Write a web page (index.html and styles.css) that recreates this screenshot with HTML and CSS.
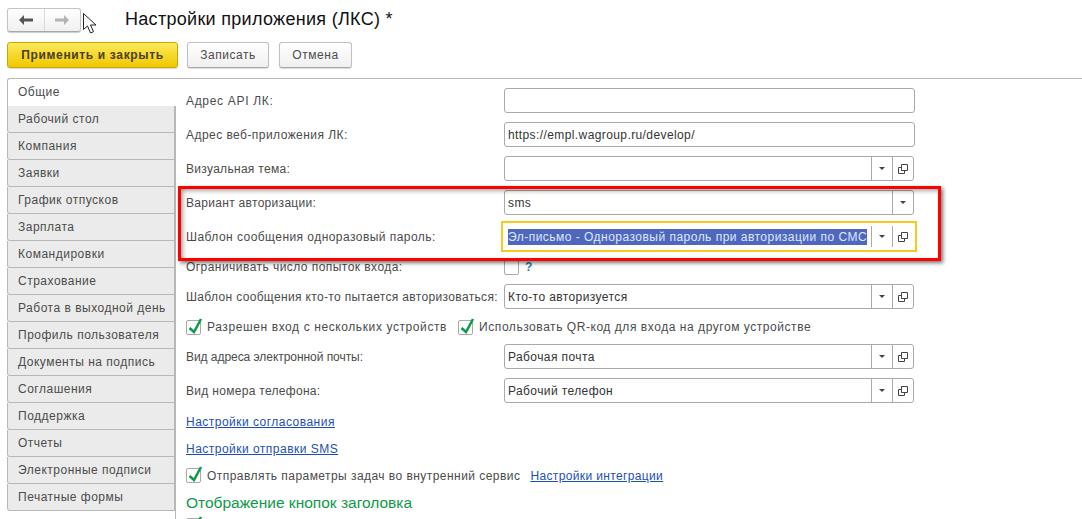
FILE: index.html
```html
<!DOCTYPE html>
<html lang="ru">
<head>
<meta charset="utf-8">
<title>Настройки приложения (ЛКС)</title>
<link rel="stylesheet" href="styles.css">
</head>
<body>
<div class="page">
  <header class="head">
    <div class="nav">
      <button class="nav-btn">
        <svg width="14" height="10" viewBox="0 0 14 10"><path d="M0 5 5 0v3.500h9v3H5V10z" fill="#555"/></svg>
      </button>
      <button class="nav-btn">
        <svg width="14" height="10" viewBox="0 0 14 10"><path d="M14 5 9 0v3.500H0v3h9V10z" fill="#b4b4b4"/></svg>
      </button>
    </div>
    <h1 class="title">Настройки приложения (ЛКС) *</h1>
  </header>
  <div class="toolbar">
    <button class="btn primary">Применить и закрыть</button>
    <button class="btn save">Записать</button>
    <button class="btn cancel">Отмена</button>
  </div>
  <div class="main">
    <nav class="tabs">
      <div class="tab active">Общие</div>
      <div class="tab">Рабочий стол</div>
      <div class="tab">Компания</div>
      <div class="tab">Заявки</div>
      <div class="tab">График отпусков</div>
      <div class="tab">Зарплата</div>
      <div class="tab">Командировки</div>
      <div class="tab">Страхование</div>
      <div class="tab">Работа в выходной день</div>
      <div class="tab">Профиль пользователя</div>
      <div class="tab">Документы на подпись</div>
      <div class="tab">Соглашения</div>
      <div class="tab">Поддержка</div>
      <div class="tab">Отчеты</div>
      <div class="tab">Электронные подписи</div>
      <div class="tab">Печатные формы</div>
    </nav>
    <section class="form">
      <div class="row"><label class="lbl ls68">Адрес API ЛК:</label><div class="field plain"></div></div>
      <div class="row"><label class="lbl">Адрес веб-приложения ЛК:</label><div class="field plain"><span class="val">https://empl.wagroup.ru/develop/</span></div></div>
      <div class="row"><label class="lbl ls30">Визуальная тема:</label>
        <div class="field"><span class="val"></span>
          <span class="fb"><i class="caret"></i></span>
          <span class="fb"><svg class="open" width="10" height="10" viewBox="0 0 10 10"><path d="M3.500.5h6v6h-6zM3.500 3.500H.5v6h6V7" fill="none" stroke="#444"/></svg></span>
        </div>
      </div>
      <div class="row"><label class="lbl ls30">Вариант авторизации:</label>
        <div class="field"><span class="val">sms</span><span class="fb"><i class="caret"></i></span></div>
      </div>
      <div class="row"><label class="lbl">Шаблон сообщения одноразовый пароль:</label>
        <div class="field focus"><span class="val"><span class="sel">Эл-письмо - Одноразовый пароль при авторизации по СМС</span></span>
          <span class="fb"><i class="caret"></i></span>
          <span class="fb"><svg class="open" width="10" height="10" viewBox="0 0 10 10"><path d="M3.500.5h6v6h-6zM3.500 3.500H.5v6h6V7" fill="none" stroke="#444"/></svg></span>
        </div>
      </div>
      <div class="row check-row"><label class="lbl">Ограничивать число попыток входа:</label><span class="cb"></span><span class="help">?</span></div>
      <div class="row tpl"><label class="lbl ls34">Шаблон сообщения кто-то пытается авторизоваться:</label>
        <div class="field"><span class="val">Кто-то авторизуется</span>
          <span class="fb"><i class="caret"></i></span>
          <span class="fb"><svg class="open" width="10" height="10" viewBox="0 0 10 10"><path d="M3.500.5h6v6h-6zM3.500 3.500H.5v6h6V7" fill="none" stroke="#444"/></svg></span>
        </div>
      </div>
      <div class="line devices">
        <span class="cb"><svg width="16" height="16" viewBox="0 0 16 16"><path d="M3.500 8 8 12 15 -1" fill="none" stroke="#0d9a48" stroke-width="2.500"/></svg></span><span class="txt wide">Разрешен вход с нескольких устройств</span>
        <span class="cb"><svg width="16" height="16" viewBox="0 0 16 16"><path d="M3.500 8 8 12 15 -1" fill="none" stroke="#0d9a48" stroke-width="2.500"/></svg></span><span class="txt qr">Использовать QR-код для входа на другом устройстве</span>
      </div>
      <div class="row"><label class="lbl ls00">Вид адреса электронной почты:</label>
        <div class="field"><span class="val">Рабочая почта</span>
          <span class="fb"><i class="caret"></i></span>
          <span class="fb"><svg class="open" width="10" height="10" viewBox="0 0 10 10"><path d="M3.500.5h6v6h-6zM3.500 3.500H.5v6h6V7" fill="none" stroke="#444"/></svg></span>
        </div>
      </div>
      <div class="row"><label class="lbl ls30">Вид номера телефона:</label>
        <div class="field"><span class="val">Рабочий телефон</span>
          <span class="fb"><i class="caret"></i></span>
          <span class="fb"><svg class="open" width="10" height="10" viewBox="0 0 10 10"><path d="M3.500.5h6v6h-6zM3.500 3.500H.5v6h6V7" fill="none" stroke="#444"/></svg></span>
        </div>
      </div>
      <div class="line link-line first"><a class="link">Настройки согласования</a></div>
      <div class="line link-line"><a class="link">Настройки отправки SMS</a></div>
      <div class="line link-line">
        <span class="cb"><svg width="16" height="16" viewBox="0 0 16 16"><path d="M3.500 8 8 12 15 -1" fill="none" stroke="#0d9a48" stroke-width="2.500"/></svg></span><span class="txt">Отправлять параметры задач во внутренний сервис</span><a class="link integ">Настройки интеграции</a>
      </div>
      <h2 class="group">Отображение кнопок заголовка</h2>
      <div class="line cut">
        <span class="cb"><svg width="16" height="16" viewBox="0 0 16 16"><path d="M3.500 8 8 12 15 -1" fill="none" stroke="#0d9a48" stroke-width="2.500"/></svg></span><span class="txt">Отображать</span>
      </div>
    </section>
  </div>
</div>
<svg class="cursor" width="14" height="21" viewBox="0 0 14 21"><path d="M.5.5v16l4-3.500 3 7 3-1.300-3-6.700h5.500z" fill="#fff" stroke="#222"/></svg>
<div class="mark"></div>
</body>
</html>
```
FILE: styles.css
```css
* { box-sizing: border-box; }
html, body { margin: 0; height: 100%; }
body {
  width: 1082px;
  height: 519px;
  overflow: hidden;
  background: #fff;
  font: 12px/16px "Liberation Sans", Arial, sans-serif;
  letter-spacing: .45px;
  color: #4b4b4b;
  position: relative;
}
.page { padding: 8px 0 0 7px; }
.head { display: flex; align-items: center; height: 24px; }
.nav {
  display: flex;
  width: 74px;
  height: 24px;
  border: 1px solid #c4c4c4;
  border-bottom-color: #a8a8a8;
  border-radius: 3px;
  background: linear-gradient(#fff, #f0f0f0);
  box-shadow: 0 1px 1px rgba(0,0,0,.2);
}
.nav-btn {
  flex: 1;
  border: 0;
  padding: 0;
  background: none;
  display: flex;
  align-items: center;
  justify-content: center;
}
.nav-btn + .nav-btn { border-left: 1px solid #d9d9d9; }
.title {
  margin: 0 0 3px 44px;
  font-size: 18px;
  line-height: 24px;
  font-weight: 400;
  color: #111;
  letter-spacing: .3px;
}
.toolbar { display: flex; margin-top: 10px; height: 26px; }
.btn {
  font: inherit;
  letter-spacing: .55px;
  height: 26px;
  padding: 0;
  border: 1px solid #c0c0c0;
  border-bottom-color: #a8a8a8;
  border-radius: 3px;
  background: linear-gradient(#fff, #f0f0f0);
  box-shadow: 0 1px 1px rgba(0,0,0,.15);
  color: #4b4b4b;
}
.primary {
  width: 171px;
  font-weight: 700;
  letter-spacing: .65px;
  background: linear-gradient(#fdea5c, #f0c800);
  border-color: #c8a800;
  color: #4a4020;
}
.save { width: 82px; margin-left: 9px; }
.cancel { width: 73px; margin-left: 10px; }
.main { display: flex; margin-top: 10px; }
.tabs { width: 168px; flex: none; letter-spacing: .5px; }
.tab {
  height: 27px;
  padding: 5px 0 0 10px;
  background: #ebebeb;
  border: 1px solid #b8b8b8;
  border-top: 0;
  border-radius: 0 0 0 3px;
}
.tab.active {
  height: 28px;
  position: relative;
  z-index: 1;
  margin-right: -1px;
  background: #fff;
  border-top: 1px solid #b8b8b8;
  border-right: 0;
  border-bottom: 0;
  border-radius: 3px 0 0 0;
}
.form {
  flex: 1;
  height: 441px;
  padding: 9px 0 0 10px;
  border-top: 1px solid #b8b8b8;
  border-left: 1px solid #b8b8b8;
  overflow: hidden;
}
.row { display: flex; align-items: center; height: 34px; padding-bottom: 9px; }
.lbl { width: 318px; flex: none; white-space: nowrap; }
.ls68 { letter-spacing: .68px; }
.ls34 { letter-spacing: .34px; }
.ls30 { letter-spacing: .3px; }
.ls00 { letter-spacing: -.05px; }
.field {
  width: 410px;
  height: 25px;
  display: flex;
  align-items: stretch;
  border: 1px solid #a9a9a9;
  border-radius: 3px;
  background: #fff;
  color: #333;
}
.field.plain { width: 411px; }
.val { flex: 1; padding: 4px 0 0 3px; white-space: nowrap; min-width: 0; letter-spacing: .4px; }
.fb {
  width: 21px;
  flex: none;
  border-left: 1px solid #a9a9a9;
  display: flex;
  align-items: center;
  justify-content: center;
}
.caret { display: block; width: 6px; height: 3px; border: solid transparent; border-width: 3px 3px 0; border-top-color: #444; }
.open { display: block; }
.focus {
  width: 416px;
  height: 31px;
  margin: 0 0 0 -3px;
  border: 2px solid #fbc81e;
  border-radius: 0;
}
.focus .val { padding: 6px 0 0 5px; }
.focus .sel { letter-spacing: .48px; }
.focus .fb { margin: 3px 0; }
.focus .fb:last-child { margin-right: 2px; }
.sel { background: #4f68bd; color: #dfe6ff; padding: 1px 0; }
.check-row { height: 20px; padding-bottom: 0; margin: -1px 0 7px; }
.cb {
  width: 15px;
  height: 15px;
  flex: none;
  display: inline-block;
  border: 1px solid #a9a9a9;
  border-radius: 2px;
  background: #fff;
  position: relative;
}
.cb svg { position: absolute; left: -1px; top: -1px; overflow: visible; }
.help { margin-left: 6px; color: #1c7db0; font-weight: 700; }
.line { display: flex; align-items: center; white-space: nowrap; }
.txt { margin-left: 6px; }
.wide { letter-spacing: .6px; }
.qr { letter-spacing: .55px; }
.devices { height: 26px; margin-bottom: 4px; margin-top: -4px; }
.devices .wide + .cb { margin-left: 11px; }
.link-line { height: 27px; }
.link-line.first { margin-top: -4px; }
.link { color: #1c4fb5; text-decoration: underline; letter-spacing: .48px; }
.integ { margin-left: 10px; letter-spacing: .36px; }
.group {
  margin: 0;
  font-size: 15.5px;
  line-height: 27px;
  font-weight: 400;
  color: #0d9a48;
  letter-spacing: 0;
}
.cut { height: 18px; }
.cursor { position: absolute; left: 83px; top: 13px; }
.mark {
  position: absolute;
  left: 178px;
  top: 186px;
  width: 763px;
  height: 75px;
  border: 3px solid #f00;
  box-shadow: 2px 2px 4px rgba(0,0,0,.55), inset 2px 2px 4px rgba(0,0,0,.35);
  pointer-events: none;
}
```
